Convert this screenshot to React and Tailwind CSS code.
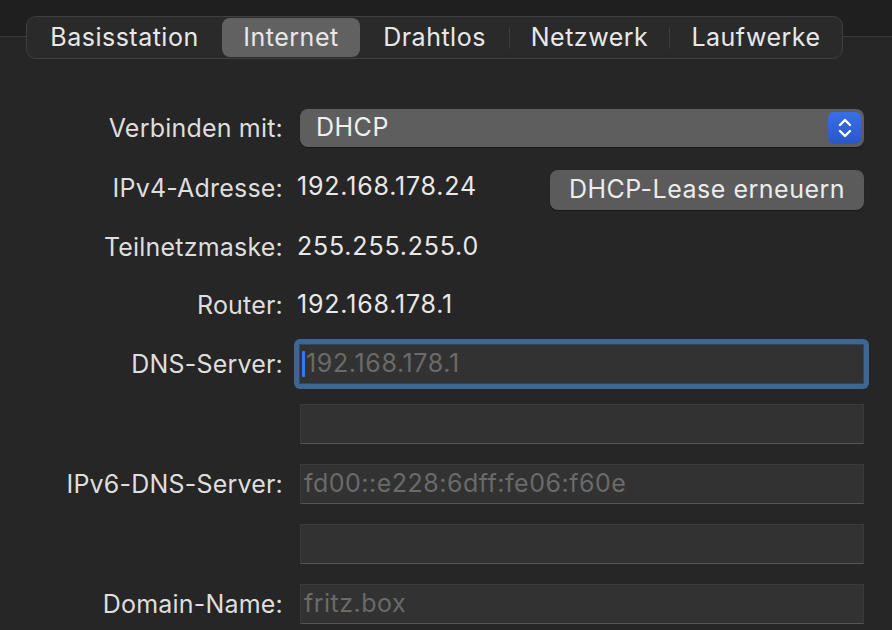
import React from "react";

const font = { fontFamily: "Inter, 'Liberation Sans', sans-serif" };

function Label({ children }) {
  return (
    <div className="w-[283px] shrink-0 text-right text-[25px] leading-none text-[#dedede] tracking-[0.008em]">
      {children}
    </div>
  );
}

function Field({ value }) {
  return (
    <div className="ml-[17px] h-[40px] w-[564px] bg-[#323232] border border-[#3a3a3a] border-b-[#555555] flex items-center px-[3px] text-[25px] tracking-[0.02em] text-[#6a6a6a]">
      {value}
    </div>
  );
}

function Tab({ w, children, selected, sep }) {
  return (
    <div className="flex items-center">
      {sep && <div className="w-px h-[22px] bg-[#3c3c3c]" />}
      <div
        className={
          "h-[39px] flex items-center justify-center text-[25px] tracking-[0.02em] text-[#e8e8e8] rounded-[8px] " +
          (selected ? "bg-[#616161]" : "")
        }
        style={{ width: w }}
      >
        {children}
      </div>
    </div>
  );
}

export default function App() {
  return (
    <div className="w-[892px] h-[630px] bg-[#262626] overflow-hidden" style={font}>
      <div className="h-[37px] bg-[#1f1f1f] border-b border-[#3a3a3a]" />
      <div className="-mt-[21px] pl-[26px]">
        <div className="w-[817px] h-[43px] rounded-[10px] border border-[#404040] bg-[#2a2a2a] flex items-center">
          <Tab w="195px">Basisstation</Tab>
          <Tab w="138px" selected>Internet</Tab>
          <Tab w="149px">Drahtlos</Tab>
          <Tab w="159px" sep>Netzwerk</Tab>
          <Tab w="172px" sep>Laufwerke</Tab>
        </div>
      </div>

      <div className="flex flex-col">
        <div className="mt-[49px] h-[40px] flex items-center">
          <Label>Verbinden mit:</Label>
          <div className="ml-[17px] h-[38px] w-[564px] rounded-[8px] bg-[#5e5e5e] flex items-center justify-between pl-[16px] pr-[3px] shadow-[0_1px_1px_rgba(0,0,0,0.4)]">
            <span className="text-[25px] tracking-[0.02em] text-[#f0f0f0]">DHCP</span>
            <div className="w-[33px] h-[32px] rounded-[6px] bg-gradient-to-b from-[#3a6fe6] to-[#2a57c9] flex items-center justify-center">
              <svg width="16" height="24" viewBox="0 0 16 24" fill="none" stroke="white" strokeWidth="2.4" strokeLinecap="round" strokeLinejoin="round">
                <path d="M3 9 L8 4 L13 9" />
                <path d="M3 15 L8 20 L13 15" />
              </svg>
            </div>
          </div>
        </div>

        <div className="mt-[20px] h-[40px] flex items-center">
          <Label>IPv4-Adresse:</Label>
          <div className="ml-[14px] w-[253px] text-[25px] tracking-[0.032em] text-[#e8e8e8] -mt-[2px]">192.168.178.24</div>
          <div className="mt-[4px] h-[40px] w-[314px] rounded-[8px] bg-[#5b5b5b] flex items-center justify-center text-[25px] tracking-[0.02em] text-[#ececec] shadow-[0_1px_1px_rgba(0,0,0,0.4)]">
            DHCP-Lease erneuern
          </div>
        </div>

        <div className="mt-[19px] h-[40px] flex items-center">
          <Label>Teilnetzmaske:</Label>
          <div className="ml-[14px] text-[25px] tracking-[0.032em] text-[#e8e8e8]">255.255.255.0</div>
        </div>

        <div className="mt-[18px] h-[40px] flex items-center">
          <Label>Router:</Label>
          <div className="ml-[14px] text-[25px] tracking-[0.032em] text-[#e8e8e8]">192.168.178.1</div>
        </div>

        <div className="mt-[19px] h-[40px] flex items-center">
          <Label>DNS-Server:</Label>
          <div className="ml-[11px] -my-[6px] p-[5px] rounded-[6px] bg-[#3d6791]">
            <div className="h-[40px] w-[565px] bg-[#323232] border border-[#2a4a6a] flex items-center px-[2px] text-[25px] tracking-[0.025em] text-[#6a6a6a]">
              <div className="w-[3px] h-[26px] bg-[#3478f6] rounded-[1px] mr-[1px]" />
              192.168.178.1
            </div>
          </div>
        </div>

        <div className="mt-[20px] h-[40px] flex items-center">
          <div className="w-[283px] shrink-0" />
          <Field value="" />
        </div>

        <div className="mt-[20px] h-[40px] flex items-center">
          <Label>IPv6-DNS-Server:</Label>
          <Field value="fd00::e228:6dff:fe06:f60e" />
        </div>

        <div className="mt-[20px] h-[40px] flex items-center">
          <div className="w-[283px] shrink-0" />
          <Field value="" />
        </div>

        <div className="mt-[20px] h-[40px] flex items-center">
          <Label>Domain-Name:</Label>
          <Field value="fritz.box" />
        </div>
      </div>
    </div>
  );
}
